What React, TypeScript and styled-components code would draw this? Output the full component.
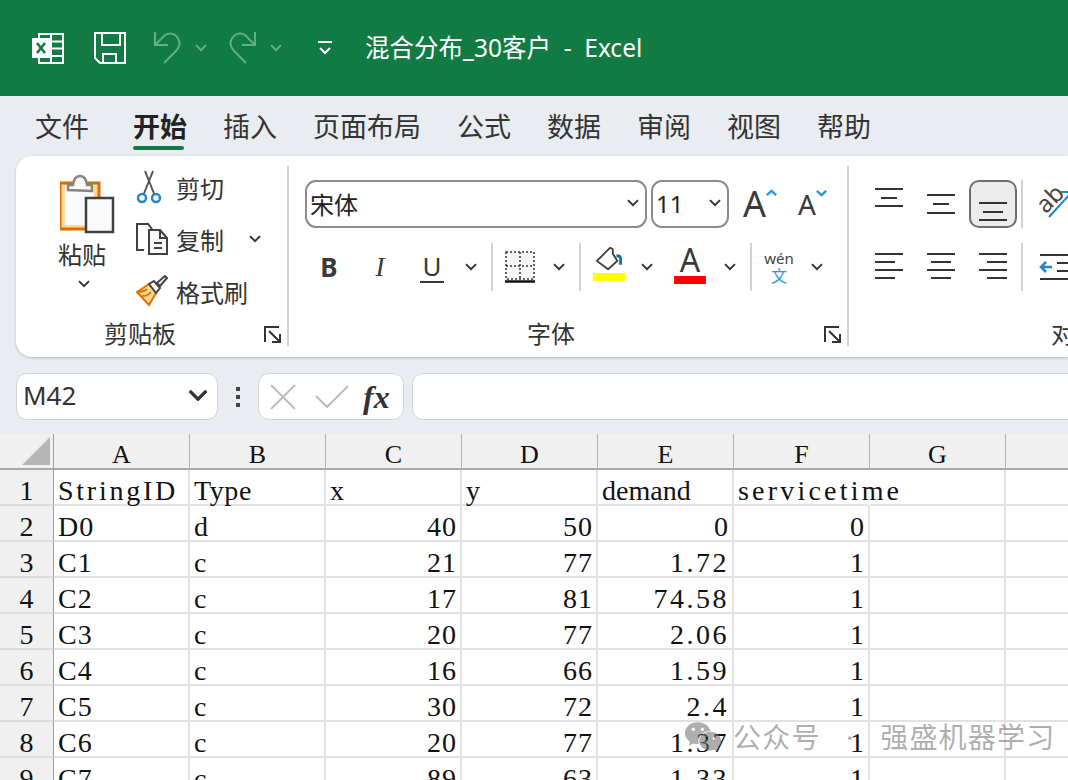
import React from 'react';
import styled, { createGlobalStyle } from 'styled-components';
import { FaWeixin } from 'react-icons/fa';

const GlobalStyle = createGlobalStyle`
  html, body { margin: 0; padding: 0; background: #e9edf1; }
  body { font-family: "Noto Sans", "Noto Sans CJK SC", sans-serif; color: #333; }
  * { box-sizing: border-box; }
`;

const Page = styled.div`
  position: relative;
  width: 1068px;
  height: 780px;
  overflow: hidden;
  background: #e9edf1;
`;

/* title bar */
const TitleBar = styled.header`
  height: 96px;
  display: flex;
  align-items: center;
  padding-left: 32px;
  background: #117b43;
  color: #fff;
`;
const QuickItem = styled.div<{ $w: number; $ml?: number }>`
  width: ${(p) => p.$w}px;
  margin-left: ${(p) => p.$ml ?? 0}px;
  flex: none;
  display: flex;
  align-items: center;
  justify-content: center;
`;
const Title = styled.div`
  margin-left: 33px;
  font-size: 24.5px;
  line-height: 32px;
  white-space: pre;
`;

/* tabs */
const Tabs = styled.nav`
  height: 60px;
  display: flex;
  gap: 36px;
  padding-left: 35px;
`;
const Tab = styled.div<{ $active?: boolean }>`
  position: relative;
  height: 60px;
  margin-left: ${(p) => (p.$active ? 8 : 0)}px;
  padding-top: 11px;
  font-size: 27px;
  line-height: 40px;
  font-weight: ${(p) => (p.$active ? 700 : 400)};
  color: ${(p) => (p.$active ? '#222' : '#333')};
  &::after {
    content: '';
    display: ${(p) => (p.$active ? 'block' : 'none')};
    position: absolute;
    left: 0;
    right: 3px;
    top: 50px;
    height: 4px;
    border-radius: 2px;
    background: #117b43;
  }
`;

/* ribbon */
const Ribbon = styled.section`
  height: 201px;
  margin-left: 16px;
  padding: 10px 0 11px;
  display: flex;
  background: #fff;
  border-radius: 16px 0 0 16px;
  box-shadow: 0 1px 3px rgba(0, 0, 0, 0.22);
  overflow: hidden;
`;
const Group = styled.div<{ $w: number; $last?: boolean }>`
  flex: none;
  width: ${(p) => p.$w}px;
  display: flex;
  flex-direction: column;
  border-right: ${(p) => (p.$last ? 'none' : '2px solid #d2d2d2')};
`;
const GroupBody = styled.div`
  flex: 1;
  min-height: 0;
`;
const GroupFoot = styled.div`
  height: 28px;
  padding: 4px 6px 0 0;
  display: flex;
  align-items: center;
`;
const GroupLabel = styled.div<{ $w: number }>`
  width: ${(p) => p.$w}px;
  flex: none;
  text-align: center;
  font-size: 24px;
  line-height: 24px;
  color: #333;
`;
const ClipboardBody = styled(GroupBody)`
  display: flex;
  padding-left: 36px;
`;
const PasteColumn = styled.div`
  width: 60px;
  display: flex;
  flex-direction: column;
  align-items: center;
  padding-top: 8px;
`;
const PasteGlyph = styled.div`
  margin-left: 12px;
  width: 56px;
  height: 60px;
  flex: none;
`;
const PasteLabel = styled.div`
  font-size: 24px;
  line-height: 30px;
  margin-top: 6px;
  margin-bottom: 10px;
`;
const SmallCommands = styled.div`
  margin: -2px 0 0 24px;
  display: flex;
  flex-direction: column;
  gap: 6px;
`;
const SmallCommand = styled.div`
  height: 46px;
  display: flex;
  align-items: center;
  font-size: 24px;
`;
const SmallIcon = styled.div`
  width: 40px;
  flex: none;
  display: flex;
`;
const FontBody = styled(GroupBody)`
  padding: 14px 0 0 16px;
`;
const ToolRow = styled.div<{ $h: number; $mt?: number; $gap?: number }>`
  height: ${(p) => p.$h}px;
  margin-top: ${(p) => p.$mt ?? 0}px;
  display: flex;
  align-items: center;
  gap: ${(p) => p.$gap ?? 0}px;
`;
const Combo = styled.div<{ $w: number }>`
  width: ${(p) => p.$w}px;
  height: 48px;
  flex: none;
  display: flex;
  align-items: center;
  justify-content: space-between;
  padding: 0 6px 2px 3px;
  border: 2px solid #8b8b8b;
  border-radius: 11px;
  font-size: 24px;
  color: #222;
`;
const GrowFont = styled.div<{ $size: number; $w: number; $ml: number }>`
  width: ${(p) => p.$w}px;
  margin-left: ${(p) => p.$ml}px;
  display: flex;
  align-items: flex-start;
  font-size: ${(p) => p.$size}px;
  line-height: 40px;
  color: #3a3a3a;
`;
const ToolButton = styled.div<{ $w: number; $ml?: number }>`
  width: ${(p) => p.$w}px;
  margin-left: ${(p) => p.$ml ?? 0}px;
  flex: none;
  height: 46px;
  display: flex;
  flex-direction: column;
  align-items: center;
  justify-content: center;
`;
const BoldMark = styled.span`
  font-size: 26px;
  font-weight: 700;
  color: #3a3a3a;
`;
const ItalicMark = styled.span`
  font-family: "Liberation Serif", serif;
  font-size: 27px;
  font-style: italic;
  color: #3a3a3a;
`;
const UnderMark = styled.span`
  font-size: 26px;
  line-height: 30px;
  color: #3a3a3a;
  border-bottom: 2px solid #3a3a3a;
  padding: 0 2px;
`;
const Separator = styled.div<{ $mx?: number; $h?: number }>`
  flex: none;
  width: 2px;
  height: ${(p) => p.$h ?? 48}px;
  margin: 0 ${(p) => p.$mx ?? 6}px;
  background: #d2d2d2;
`;
const ColorBar = styled.div<{ $c: string }>`
  width: 32px;
  height: 8px;
  margin-bottom: 6px;
  background: ${(p) => p.$c};
`;
const FontColorMark = styled.span`
  font-size: 32px;
  line-height: 32px;
  color: #3a3a3a;
`;
const PinyinMark = styled.span`
  font-size: 15px;
  line-height: 17px;
  color: #444;
`;
const PinyinChar = styled.span`
  font-size: 16px;
  line-height: 18px;
  color: #2f96d8;
`;
const AlignBody = styled(GroupBody)`
  padding: 14px 0 0 16px;
`;
const AlignButton = styled.div<{ $on?: boolean }>`
  width: 48px;
  height: 48px;
  flex: none;
  border-radius: 10px;
  border: ${(p) => (p.$on ? '2px solid #6e6e6e' : '2px solid transparent')};
  background: ${(p) => (p.$on ? '#ececec' : 'transparent')};
`;

/* formula bar */
const FormulaBar = styled.div`
  height: 47px;
  margin-top: 16px;
  display: flex;
  padding-left: 16px;
`;
const FormulaBox = styled.div<{ $w?: number }>`
  width: ${(p) => (p.$w ? `${p.$w}px` : 'auto')};
  flex: ${(p) => (p.$w ? 'none' : '1')};
  margin-right: ${(p) => (p.$w ? 0 : -20)}px;
  display: flex;
  align-items: center;
  background: #fff;
  border: 1.5px solid #d4d4d4;
  border-radius: 11px;
`;
const NameBox = styled(FormulaBox)`
  justify-content: space-between;
  padding: 0 9px 4px 6px;
  font-size: 26px;
  color: #333;
`;
const FxBox = styled(FormulaBox)`
  padding-left: 11px;
`;
const FormulaInput = styled(FormulaBox)`
  margin-left: 8px;
`;
const FxMark = styled.span`
  margin-left: 14px;
  font-family: "Liberation Serif", serif;
  font-style: italic;
  font-weight: 700;
  font-size: 32px;
  line-height: 40px;
  color: #333;
`;
const DotHandle = styled.div`
  width: 40px;
  flex: none;
  display: flex;
  flex-direction: column;
  align-items: center;
  justify-content: center;
  gap: 4px;
  & > i {
    width: 4px;
    height: 4px;
    background: #444;
  }
`;

/* sheet */
const Sheet = styled.div`
  margin-top: 14px;
  display: grid;
  grid-template-columns: 54px repeat(7, 136px) 200px;
  grid-auto-rows: 36px;
  font-family: "Liberation Serif", "Noto Sans CJK SC", serif;
  font-size: 28px;
  color: #111;
  background: #fff;
`;
const Corner = styled.div`
  display: flex;
  align-items: flex-end;
  justify-content: flex-end;
  padding: 0 3px 3px 0;
  background: #f0f0f0;
  border-right: 1px solid #a0a0a0;
  border-bottom: 2px solid #a8a8a8;
`;
const ColHead = styled.div`
  display: flex;
  align-items: flex-end;
  justify-content: center;
  font-size: 26px;
  line-height: 26px;
  background: #f0f0f0;
  border-right: 1px solid #b0b0b0;
  border-bottom: 2px solid #a8a8a8;
`;
const RowHead = styled.div`
  display: flex;
  align-items: flex-end;
  justify-content: center;
  line-height: 26px;
  background: #f0f0f0;
  border-right: 1px solid #a0a0a0;
  border-bottom: 2px solid #dcdcdc;
`;
const Cell = styled.div<{ $num?: boolean; $spill?: boolean; $track: number }>`
  display: flex;
  align-items: flex-end;
  justify-content: ${(p) => (p.$num ? 'flex-end' : 'flex-start')};
  padding: 0 3px 0 4px;
  line-height: 26px;
  letter-spacing: ${(p) => p.$track}px;
  white-space: nowrap;
  border-right: 2px solid ${(p) => (p.$spill ? 'transparent' : '#e2e2e2')};
  border-bottom: 2px solid #e2e2e2;
`;

/* watermark */
const Watermark = styled.div`
  position: absolute;
  left: 684px;
  top: 718px;
  display: flex;
  align-items: center;
  gap: 11px;
  font-size: 28px;
  line-height: 38px;
  letter-spacing: 1.2px;
  color: rgba(120, 120, 120, 0.6);
  white-space: pre;
  pointer-events: none;
`;

const Chevron = ({ c = '#333', w = 12 }: { c?: string; w?: number }) => (
  <svg width={w} height={w * 0.6} viewBox="0 0 12 7" fill="none">
    <path d="M1 1l5 5 5-5" stroke={c} strokeWidth="2" />
  </svg>
);

const ExcelIcon = () => (
  <svg width="32" height="32" viewBox="0 0 32 32" fill="none" stroke="#fff" strokeWidth="2">
    <path d="M7 2h24v29H7z" />
    <path d="M19 2v29M19 9.500h12M19 16.500h12M19 24h12" />
    <rect x="0" y="6" width="19" height="20" fill="#fff" stroke="none" />
    <path d="M5 11l8 10M13 11l-8 10" stroke="#117b43" strokeWidth="2.600" />
  </svg>
);
const SaveIcon = () => (
  <svg width="32" height="32" viewBox="0 0 32 32" fill="none" stroke="#fff" strokeWidth="2">
    <path d="M1 1h30v30H6l-5-5z" />
    <path d="M8 1v12h18V1M9 31v-9h13v9" />
  </svg>
);
const UndoIcon = ({ flip }: { flip?: boolean }) => (
  <svg width="30" height="34" viewBox="0 0 30 34" fill="none" stroke="#5fb088" strokeWidth="2" style={flip ? { transform: 'scaleX(-1)' } : undefined}>
    <path d="M2 1v13h13M2 14l10-10q5-3 10 0 6 5 4 11-1 3-4 6L11 32" />
  </svg>
);
const CustomizeIcon = () => (
  <svg width="14" height="16" viewBox="0 0 14 16" fill="none" stroke="#fff" strokeWidth="2">
    <path d="M0 2h14M2 8l5 5 5-5" />
  </svg>
);
const PasteIcon = () => (
  <svg width="56" height="60" viewBox="2 0 56 60" fill="none">
    <rect x="2" y="9" width="39" height="46" fill="#fbd99b" stroke="#dc6d00" strokeWidth="3" />
    <path d="M7 11h29v40H7z" fill="#fafafa" />
    <path d="M10 16v-5h5q1-9 7-9t7 9h5v6z" fill="#fafafa" stroke="#86827c" strokeWidth="2.500" />
    <rect x="28" y="24" width="27" height="34" fill="#fafafa" stroke="#404040" strokeWidth="2.500" />
  </svg>
);
const ScissorsIcon = () => (
  <svg width="26" height="34" viewBox="0 0 26 34" fill="none">
    <path d="M17 1L7 26M9 1l10 25" stroke="#555" strokeWidth="2" />
    <circle cx="6" cy="28" r="4" stroke="#2186cf" strokeWidth="2.500" fill="#fff" />
    <circle cx="20" cy="28" r="4" stroke="#2186cf" strokeWidth="2.500" fill="#fff" />
  </svg>
);
const CopyIcon = () => (
  <svg width="32" height="32" viewBox="0 0 32 32" fill="none" stroke="#404040" strokeWidth="2">
    <path d="M8 27H1V1h11l4 5" />
    <path d="M13 7h11l7 8v16H13z" fill="#fafafa" />
    <path d="M24 7v8h7M18 20h8M18 25h8" />
  </svg>
);
const BrushIcon = () => (
  <svg width="32" height="32" viewBox="0 0 32 32" fill="none">
    <path d="M13 9L1 17l12 13 7-12z" fill="#fbd99b" stroke="#e07400" strokeWidth="2" />
    <path d="M1 17q7 0 10-3M6 21q6 0 9-4" stroke="#e07400" strokeWidth="2" />
    <path d="M13 9l7 9 4-5-6-7z" fill="#fff" stroke="#444" strokeWidth="2" />
    <path d="M21 8l8-7 2 2-7 8z" fill="#fff" stroke="#444" strokeWidth="2" />
  </svg>
);
const LauncherIcon = () => (
  <svg width="17" height="17" viewBox="0 0 17 17" fill="none" stroke="#333" strokeWidth="2" style={{ flex: 'none' }}>
    <path d="M15 1H1v15M5 5l10 10M16 8v8H8" />
  </svg>
);
const BordersIcon = () => (
  <svg width="30" height="32" viewBox="0 0 30 32" fill="none">
    <rect x="1" y="1" width="28" height="27" fill="#f7f7f7" stroke="#333" strokeWidth="1.500" strokeDasharray="2 2" />
    <path d="M15 1v27M1 15h28" stroke="#333" strokeWidth="1.500" strokeDasharray="2 2" />
    <path d="M0 30.500h30" stroke="#111" strokeWidth="2.500" />
  </svg>
);
const FillIcon = () => (
  <svg width="32" height="26" viewBox="0 0 32 28" fill="none">
    <path d="M3 15L14 4l3-3q4 0 3 5v1l5 8-10 9z" fill="#fff" stroke="#404040" strokeWidth="2" />
    <path d="M24 8q5-1 6 4v7h-3v-7q-1-1-3-1z" fill="#0f6cbd" />
  </svg>
);
const Caret = ({ down }: { down?: boolean }) => (
  <svg width="11" height="8" viewBox="0 0 13 9" fill="none" stroke="#2f96d8" strokeWidth="3" style={{ marginTop: 5, flex: 'none' }}>
    <path d={down ? 'M1 2l5.500 5L12 2' : 'M1 7l5.500-5L12 7'} />
  </svg>
);
const OrientIcon = () => (
  <svg width="36" height="40" viewBox="0 0 36 40" fill="none" style={{ flex: 'none', marginLeft: 9 }}>
    <text x="0" y="23" fontSize="24" fill="#444" fontFamily="Noto Sans" transform="rotate(-45 14 15)">ab</text>
    <path d="M13 33L35 9M25 8h10v10" stroke="#2186cf" strokeWidth="2" />
  </svg>
);
const LinesIcon = ({ lines }: { lines: [number, number, number][] }) => (
  <svg width="44" height="44" viewBox="0 0 44 44" fill="none" stroke="#333" strokeWidth="2" style={{ display: 'block' }}>
    {lines.map(([x1, x2, y]) => (
      <path key={`${x1}-${y}`} d={`M${x1} ${y}H${x2}`} />
    ))}
  </svg>
);
const IndentIcon = () => (
  <svg width="36" height="46" viewBox="0 0 36 46" fill="none" style={{ flex: 'none', marginLeft: 11 }}>
    <path d="M2 11h28M19 19h11M19 27h11M2 35h28" stroke="#333" strokeWidth="2" />
    <path d="M14 23H3M8 18l-5 5 5 5" stroke="#2186cf" strokeWidth="2.500" />
  </svg>
);
const CrossIcon = () => (
  <svg width="26" height="26" viewBox="0 0 26 26" fill="none" stroke="#bdbdbd" strokeWidth="2">
    <path d="M1 1l24 24M25 1L1 25" />
  </svg>
);
const CheckIcon = () => (
  <svg width="34" height="24" viewBox="0 0 34 24" fill="none" stroke="#bdbdbd" strokeWidth="2" style={{ marginLeft: 19 }}>
    <path d="M1 11l11 11L33 1" />
  </svg>
);

const TABS = ['文件', '开始', '插入', '页面布局', '公式', '数据', '审阅', '视图', '帮助'];
const COLS = ['A', 'B', 'C', 'D', 'E', 'F', 'G', 'H'];
const ROWS: (string | number)[][] = [
  ['StringID', 'Type', 'x', 'y', 'demand', 'servicetime'],
  ['D0', 'd', 40, 50, 0, 0],
  ['C1', 'c', 21, 77, 1.72, 1],
  ['C2', 'c', 17, 81, 74.58, 1],
  ['C3', 'c', 20, 77, 2.06, 1],
  ['C4', 'c', 16, 66, 1.59, 1],
  ['C5', 'c', 30, 72, 2.4, 1],
  ['C6', 'c', 20, 77, 1.37, 1],
  ['C7', 'c', 89, 63, 1.33, 1],
];

// the sheet font is half-width, so spread the serif out to the same text widths
const HEADER_TRACK: Record<string, number> = { StringID: 2.75, Type: 0.6, demand: 0, servicetime: 3.2 };
const trackOf = (v: string | number | undefined) => {
  if (typeof v === 'number') return Number.isInteger(v) ? 1 : 2.5;
  return HEADER_TRACK[v ?? ''] ?? 1;
};

export default function App() {
  return (
    <Page>
      <GlobalStyle />
      <TitleBar>
        <QuickItem $w={32}><ExcelIcon /></QuickItem>
        <QuickItem $w={32} $ml={30}><SaveIcon /></QuickItem>
        <QuickItem $w={30} $ml={27}><UndoIcon /></QuickItem>
        <QuickItem $w={12} $ml={12}><Chevron c="#5fb088" /></QuickItem>
        <QuickItem $w={30} $ml={20}><UndoIcon flip /></QuickItem>
        <QuickItem $w={12} $ml={13}><Chevron c="#5fb088" /></QuickItem>
        <QuickItem $w={14} $ml={36}><CustomizeIcon /></QuickItem>
        <Title>混合分布_30客户  -  Excel</Title>
      </TitleBar>

      <Tabs>
        {TABS.map((t) => (
          <Tab key={t} $active={t === '开始'}>{t}</Tab>
        ))}
      </Tabs>

      <Ribbon>
        <Group $w={273}>
          <ClipboardBody>
            <PasteColumn>
              <PasteGlyph><PasteIcon /></PasteGlyph>
              <PasteLabel>粘贴</PasteLabel>
              <QuickItem $w={12} $ml={4}><Chevron /></QuickItem>
            </PasteColumn>
            <SmallCommands>
              <SmallCommand>
                <SmallIcon><ScissorsIcon /></SmallIcon>剪切
              </SmallCommand>
              <SmallCommand>
                <SmallIcon><CopyIcon /></SmallIcon>复制
                <QuickItem $w={12} $ml={25}><Chevron /></QuickItem>
              </SmallCommand>
              <SmallCommand>
                <SmallIcon><BrushIcon /></SmallIcon>格式刷
              </SmallCommand>
            </SmallCommands>
          </ClipboardBody>
          <GroupFoot>
            <GroupLabel $w={248}>剪贴板</GroupLabel>
            <LauncherIcon />
          </GroupFoot>
        </Group>

        <Group $w={560}>
          <FontBody>
            <ToolRow $h={48} $gap={4}>
              <Combo $w={342}>宋体<Chevron /></Combo>
              <Combo $w={78}>11<Chevron /></Combo>
              <GrowFont $size={36} $w={36} $ml={10}>A<Caret /></GrowFont>
              <GrowFont $size={28} $w={32} $ml={15}>A<Caret down /></GrowFont>
            </ToolRow>
            <ToolRow $h={46} $mt={16}>
              <ToolButton $w={48}><BoldMark>B</BoldMark></ToolButton>
              <ToolButton $w={54}><ItalicMark>I</ItalicMark></ToolButton>
              <ToolButton $w={50}><UnderMark>U</UnderMark></ToolButton>
              <ToolButton $w={28}><Chevron /></ToolButton>
              <Separator />
              <ToolButton $w={42}><BordersIcon /></ToolButton>
              <ToolButton $w={28} $ml={4}><Chevron /></ToolButton>
              <Separator />
              <ToolButton $w={44}><FillIcon /><ColorBar $c="#ffff00" /></ToolButton>
              <ToolButton $w={28} $ml={2}><Chevron /></ToolButton>
              <ToolButton $w={52} $ml={3}><FontColorMark>A</FontColorMark><ColorBar $c="#ff0000" /></ToolButton>
              <ToolButton $w={28}><Chevron /></ToolButton>
              <Separator />
              <ToolButton $w={42}><PinyinMark>wén</PinyinMark><PinyinChar>文</PinyinChar></ToolButton>
              <ToolButton $w={28} $ml={3}><Chevron /></ToolButton>
            </ToolRow>
          </FontBody>
          <GroupFoot>
            <GroupLabel $w={524}>字体</GroupLabel>
            <QuickItem $w={17} $ml={11}><LauncherIcon /></QuickItem>
          </GroupFoot>
        </Group>

        <Group $w={500} $last>
          <AlignBody>
            <ToolRow $h={48} $gap={4}>
              <AlignButton><LinesIcon lines={[[8, 36, 7], [14, 30, 16], [8, 36, 24]]} /></AlignButton>
              <AlignButton><LinesIcon lines={[[8, 36, 13], [14, 30, 22], [8, 36, 31]]} /></AlignButton>
              <AlignButton $on><LinesIcon lines={[[8, 36, 21], [12, 32, 30], [8, 36, 38]]} /></AlignButton>
              <Separator $mx={0} />
              <OrientIcon />
            </ToolRow>
            <ToolRow $h={46} $mt={16} $gap={4}>
              <AlignButton><LinesIcon lines={[[8, 36, 9], [8, 28, 17], [8, 36, 25], [8, 28, 33]]} /></AlignButton>
              <AlignButton><LinesIcon lines={[[8, 36, 9], [12, 32, 17], [8, 36, 25], [12, 32, 33]]} /></AlignButton>
              <AlignButton><LinesIcon lines={[[8, 36, 9], [16, 36, 17], [8, 36, 25], [16, 36, 33]]} /></AlignButton>
              <Separator $mx={0} />
              <IndentIcon />
            </ToolRow>
          </AlignBody>
          <GroupFoot>
            <GroupLabel $w={500}>对齐方式</GroupLabel>
          </GroupFoot>
        </Group>
      </Ribbon>

      <FormulaBar>
        <NameBox $w={202}>M42<Chevron c="#333" w={20} /></NameBox>
        <DotHandle><i /><i /><i /></DotHandle>
        <FxBox $w={146}>
          <CrossIcon />
          <CheckIcon />
          <FxMark>fx</FxMark>
        </FxBox>
        <FormulaInput />
      </FormulaBar>

      <Sheet>
        <Corner>
          <svg width="28" height="28" viewBox="0 0 28 28"><path d="M28 0v28H0z" fill="#b6b6b6" /></svg>
        </Corner>
        {COLS.map((c) => (
          <ColHead key={c}>{c}</ColHead>
        ))}
        {ROWS.map((row, r) => (
          <React.Fragment key={r}>
            <RowHead>{r + 1}</RowHead>
            {COLS.map((_, c) => {
              const v = row[c];
              return (
                <Cell key={c} $num={typeof v === 'number'} $spill={r === 0 && c === 5} $track={trackOf(v)}>
                  {v}
                </Cell>
              );
            })}
          </React.Fragment>
        ))}
      </Sheet>

      <Watermark>
        <FaWeixin size={38} />
        公众号   ·   强盛机器学习
      </Watermark>
    </Page>
  );
}
